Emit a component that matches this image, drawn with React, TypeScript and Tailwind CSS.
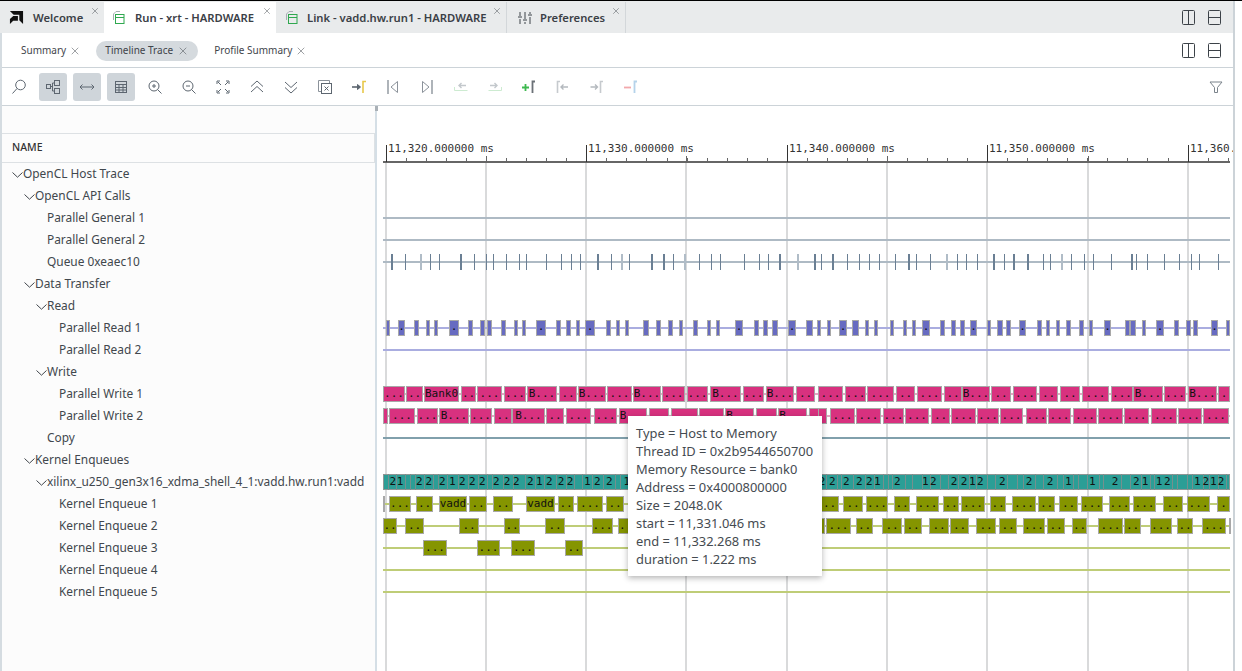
import type { ReactNode } from "react";
import { X } from "lucide-react";

// Bars are read off the screenshot as [start, end, label], in crops scaled 3x from a base x.
type Raw = [number, number, string?];
type Bar = { x: number; w: number; label: string };

const scaled = (base: number, raw: Raw[]): Bar[] =>
  raw.map(([a, b, label]) => {
    const x = Math.round(base + a / 3);
    return { x, w: Math.round(base + b / 3) - x, label: label ?? "" };
  });

const queueTicks: [number, number][] = [
  [390.7, 2], [405.3, 1], [420, 2], [430.3, 1], [439.3, 1], [460, 2], [474.3, 1], [485.7, 1], [493.3, 1], [506.3, 1],
  [519.3, 1], [526, 1], [546.3, 1], [561.3, 1], [571.3, 1], [580.3, 1], [597, 2], [611.3, 1], [620.7, 2], [629.3, 1],
  [650.7, 2], [663, 2], [673.3, 1], [684, 2], [699.3, 1], [711.3, 1], [720.3, 1], [744.3, 1], [759.3, 1], [768.3, 1],
  [779, 2], [797, 2], [814, 2], [821.3, 1], [832, 2], [847.3, 1], [859.3, 1], [869.3, 1], [879.3, 1], [895.3, 1],
  [908, 2], [916.3, 1], [930.3, 1], [946, 2], [957.3, 1], [965.7, 1], [977.3, 1], [992.7, 2], [1004.3, 1], [1013, 2],
  [1027, 2], [1043.3, 1], [1050.3, 1], [1060.7, 2], [1071.3, 1], [1084.3, 1], [1093.3, 1], [1111.3, 1], [1130.7, 2],
  [1136.3, 1], [1147.3, 1], [1164.3, 1], [1179.3, 1], [1191.3, 1], [1199, 1], [1218.3, 1],
];
const fadedTicks = [420, 620.7, 684, 797, 946, 1060.7];

const readBars = [
  ...scaled(370, [
    [47, 61], [83, 106, "."], [131, 148], [167, 181], [191, 205], [236, 268, "."], [293, 310], [329, 346], [351, 366],
    [392, 409], [431, 445], [455, 469], [497, 529, "."], [557, 574], [587, 604], [617, 631], [644, 676, "."], [707, 724],
    [737, 751], [764, 778], [818, 838], [857, 874], [893, 910], [926, 940], [968, 985], [1010, 1024], [1037, 1051],
    [1094, 1119, "."], [1151, 1168], [1178, 1195], [1207, 1225], [1253, 1279, "."],
  ]),
  ...scaled(800, [
    [19, 39], [50, 64], [80, 94], [118, 142, "."], [157, 177], [194, 208], [221, 235], [270, 282], [308, 322], [335, 349],
    [367, 391, "."], [419, 435], [452, 468], [479, 496], [509, 532, "."], [560, 574], [592, 609], [619, 634], [656, 679, "."],
    [710, 727], [737, 751], [767, 781], [797, 814], [836, 853], [866, 880], [911, 934, "."], [974, 991], [991, 1009],
    [1025, 1039], [1069, 1093, "."], [1121, 1138], [1157, 1173], [1180, 1195], [1232, 1255, "."], [1277, 1290],
  ]),
];

const write1Bars = [
  ...scaled(370, [
    [40, 105, "..."], [109, 158, ".."], [162, 266, "Bank0"], [272, 318, ".."], [322, 397, "..."], [402, 468, "..."],
    [472, 560, "B..."], [566, 620, ".."], [625, 708, "B..."], [712, 786, "..."], [790, 872, "B..."], [877, 945, "..."],
    [950, 1015, "..."], [1020, 1112, "B..."], [1118, 1183, "..."], [1188, 1272, "B..."], [1278, 1335, ".."],
  ]),
  ...scaled(820, [
    [-5, 70, "..."], [75, 138, "..."], [142, 222, "..."], [228, 285, ".."], [291, 367, "..."], [372, 425, ".."],
    [425, 510, "B..."], [514, 574, ".."], [580, 652, "..."], [657, 714, ".."], [720, 780, ".."], [786, 867, "..."],
    [873, 938, "..."], [940, 1028, "B..."], [1032, 1098, "..."], [1103, 1190, "B..."], [1195, 1230, "."],
  ]),
];

const write2Bars = [
  ...scaled(370, [
    [40, 53], [58, 134, "..."], [141, 204, "..."], [206, 296, "B..."], [300, 366, "..."], [372, 425, ".."], [427, 524, "B..."],
    [528, 581, ".."], [587, 663, "..."], [672, 742, "..."], [746, 831, "B..."], [837, 898, "..."], [903, 983, "..."],
    [987, 1063, "..."], [1066, 1152, "B..."], [1158, 1222, "..."], [1225, 1312, "B..."], [1317, 1370, ".."],
  ]),
  ...scaled(820, [
    [-5, 20], [30, 105, "..."], [108, 184, "..."], [190, 252, "..."], [255, 327, "..."], [333, 389, ".."], [393, 468, "..."],
    [471, 536, "..."], [540, 610, "..."], [617, 682, "..."], [685, 752, "..."], [759, 831, "..."], [834, 909, "..."],
    [912, 987, "..."], [993, 1070, "..."], [1074, 1145, "..."], [1149, 1227, "..."],
  ]),
];

const kernel1Bars = [
  ...scaled(370, [
    [40, 45], [57, 124, "..."], [137, 190, ".."], [207, 290, "vadd"], [297, 352, ".."], [368, 430, ".."], [467, 555, "vadd"],
    [563, 613, ".."], [620, 700, "..."], [708, 763, ".."],
  ]),
  ...scaled(820, [
    [0, 58, ".."], [68, 130, ".."], [137, 204, "..."], [221, 271, ".."], [287, 358, "..."], [368, 418, ".."], [423, 495, "..."],
    [509, 559, ".."], [575, 648, "..."], [654, 706, ".."], [716, 774, ".."], [782, 850, "..."], [866, 930, "..."],
    [938, 1009, "..."], [1030, 1090, ".."], [1100, 1170, "..."], [1190, 1230, "."],
  ]),
];

const kernel2Bars = [
  ...scaled(370, [[40, 82, ".."], [104, 162, ".."], [267, 327, ".."], [402, 450, ".."], [525, 585, ".."], [666, 730, "..."], [745, 790, ".."]]),
  ...scaled(820, [
    [0, 15], [18, 94, "..."], [107, 160, ".."], [186, 247, ".."], [252, 307, ".."], [326, 387, ".."], [390, 447, ".."], [468, 528, ".."],
    [536, 591, ".."], [608, 676, "..."], [681, 736, ".."], [755, 802, ".."], [833, 909, "..."], [912, 964, ".."], [989, 1056, "..."],
    [1070, 1120, ".."], [1145, 1217, "..."], [1226, 1230],
  ]),
];

const kernel3Bars = scaled(370, [[158, 232, "..."], [320, 390, "..."], [422, 496, "..."], [585, 640, ".."]]);

const tealSeps = [
  388, 396, 405, 410, 415, 424, 433, 438, 447, 458, 468, 478, 487, 492, 503, 513, 525, 535, 544, 556, 566, 574, 582, 592, 603, 615, 620,
  640, 655, 670, 700, 730, 760, 790, 826, 837, 841, 853, 865, 874, 883, 888, 892, 905, 912, 922, 930, 940, 948, 958, 969, 976, 987, 995,
  1007, 1017, 1023, 1035, 1043, 1057, 1063, 1073, 1078, 1087, 1099, 1103, 1121, 1130, 1141, 1150, 1154, 1172, 1177, 1187, 1192, 1203, 1209, 1218, 1226,
];

const tealLabels: [number, string][] = [
  [392.7, "2"], [400, "1"], [419.3, "2"], [428.7, "2"], [442.3, "2"], [452.3, "1"], [462.3, "2"], [472.3, "2"], [482.3, "2"],
  [496.3, "2"], [507, "2"], [516.3, "2"], [530.3, "2"], [539.3, "1"], [549.3, "2"], [561, "2"], [570, "2"], [587.3, "1"], [597.3, "2"],
  [609.3, "2"], [626.7, "1"], [822, "2"], [832.3, "2"], [846.3, "2"], [859.3, "2"], [869.3, "2"], [877.3, "1"], [897.3, "2"],
  [925.3, "1"], [933.3, "2"], [954, "2"], [964, "2"], [972.3, "1"], [980.3, "2"], [1002.3, "2"], [1029, "2"], [1050, "2"], [1068.3, "1"],
  [1092.3, "1"], [1115, "2"], [1136.3, "2"], [1145, "1"], [1159, "1"], [1167.3, "2"], [1197.3, "1"], [1205.7, "2"], [1213.3, "1"], [1221, "2"],
];

const gridLines = [386, 486, 586, 686, 787, 887, 987, 1088, 1188];
const minorTicks = Array.from({ length: 43 }, (_, i) => 406 + i * 20.04);
const rulerLabels: [number, string][] = [
  [386, "11,320.000000 ms"],
  [586, "11,330.000000 ms"],
  [787, "11,340.000000 ms"],
  [987, "11,350.000000 ms"],
  [1188, "11,360."],
];

const traceLines: [number, string][] = [
  [218, "#aebac4"], [240, "#aebac4"], [262, "#aebac4"], [328, "#aaade0"], [350, "#aaade0"], [394, "#e6a3c3"], [416, "#e6a3c3"],
  [438, "#81a0ac"], [482, "#8ac6bf"], [504, "#bfcd77"], [526, "#bfcd77"], [548, "#bfcd77"], [570, "#bfcd77"], [592, "#bfcd77"],
];

function BarRow({ bars, y, fill, textY = 11 }: { bars: Bar[]; y: number; fill: string; textY?: number }) {
  return (
    <g>
      {bars.map((b) => (
        <g key={b.x}>
          <rect x={b.x + 0.5} y={y + 0.5} width={Math.max(b.w - 1, 1)} height={15} fill={fill} stroke="#a8a8a8" />
          {b.label && (
            <text x={b.x + b.w / 2} y={y + textY} textAnchor="middle" fontSize={11} fill="#111">
              {b.label}
            </text>
          )}
        </g>
      ))}
    </g>
  );
}

function Timeline() {
  return (
    <svg viewBox="377 106 856 565" className="block h-[565px] w-[856px] font-['DejaVu_Sans_Mono',monospace]">
      {gridLines.map((x) => (
        <rect key={x} x={x - 1} y={162} width={2} height={509} fill="#d9dadb" />
      ))}
      <rect x={383} y={161} width={847} height={2} fill="#666" />
      {minorTicks.filter((x) => x < 1230).map((x) => (
        <rect key={x} x={Math.round(x)} y={158} width={1} height={4} fill="#666" />
      ))}
      {gridLines.filter((_, i) => i % 2 === 1).map((x) => (
        <rect key={x} x={x} y={156} width={1} height={6} fill="#666" />
      ))}
      {rulerLabels.map(([x, label]) => (
        <g key={x}>
          <rect x={x} y={145} width={1} height={17} fill="#333" />
          <text x={x + 2} y={152} fontSize={11} fill="#333">
            {label}
          </text>
        </g>
      ))}

      {traceLines.map(([y, color]) => (
        <rect key={y} x={383} y={y - 1} width={847} height={2} fill={color} />
      ))}

      {queueTicks.map(([x, w]) => (
        <rect
          key={x}
          x={Math.round(x)}
          y={254}
          width={w}
          height={16}
          fill={fadedTicks.includes(x) ? "#b0bcc7" : "#6a7f94"}
        />
      ))}

      <BarRow bars={readBars} y={320} fill="#676bc1" textY={10} />
      <BarRow bars={write1Bars} y={386} fill="#d8317f" />
      <BarRow bars={write2Bars} y={408} fill="#d8317f" />

      <rect x={383.5} y={474.5} width={846} height={15} fill="#2b9e96" stroke="#8f9695" />
      {tealSeps.map((x) => (
        <rect key={x} x={x} y={474} width={1} height={16} fill="#74908e" />
      ))}
      {tealLabels.map(([x, label]) => (
        <text key={x} x={x} y={485} textAnchor="middle" fontSize={11} fill="#111">
          {label}
        </text>
      ))}

      <BarRow bars={kernel1Bars} y={496} fill="#859500" />
      <BarRow bars={kernel2Bars} y={518} fill="#859500" />
      <BarRow bars={kernel3Bars} y={540} fill="#859500" />
    </svg>
  );
}

// Toolbar icons are all drawn on a 20x20 box
function Ic({ children }: { children: ReactNode }) {
  return (
    <svg width="20" height="20" viewBox="0 0 20 20" fill="none" stroke="#5d6670" strokeWidth="1">
      {children}
    </svg>
  );
}

const toolbar: { key: string; active?: boolean; icon: ReactNode }[] = [
  { key: "search", icon: <Ic><circle cx="11.5" cy="8" r="4.8" /><path d="M8 11.5 3.5 16.5" /></Ic> },
  { key: "hier", active: true, icon: <Ic><rect x="3.5" y="7.5" width="4" height="4" /><rect x="11.5" y="3.5" width="5" height="5" /><rect x="11.5" y="11.5" width="5" height="5" /><path d="M7.5 9.5h2M9.5 6v8M9.5 6h2M9.5 14h2" /></Ic> },
  { key: "fit", active: true, icon: <Ic><path d="M3 10h14M5.5 7.5 3 10l2.5 2.5M14.5 7.5 17 10l-2.5 2.5" /></Ic> },
  { key: "grid", active: true, icon: <Ic><rect x="4.5" y="4.5" width="11" height="11" /><path d="M4.5 7.5h11M4.5 10.5h11M4.5 13h11M8 7.5v8M12 7.5v8" /></Ic> },
  { key: "zin", icon: <Ic><circle cx="9" cy="9" r="5" /><path d="M12.5 12.5 16.5 16.5M9 7v4M7 9h4" /></Ic> },
  { key: "zout", icon: <Ic><circle cx="9" cy="9" r="5" /><path d="M12.5 12.5 16.5 16.5M7 9h4" /></Ic> },
  { key: "full", icon: <Ic><path d="M4 7V4h3M13 4h3v3M16 13v3h-3M7 16H4v-3M5 5l3 3M15 5l-3 3M15 15l-3-3M5 15l3-3" /></Ic> },
  { key: "up", icon: <Ic><path d="M4 9.5 10 4l6 5.5M4 15 10 9.5l6 5.5" /></Ic> },
  { key: "down", icon: <Ic><path d="M4 5 10 10.5 16 5M4 10.5 10 16l6-5.5" /></Ic> },
  { key: "close", icon: <Ic><path d="M14.5 6V3.5h-11v11H6" stroke="#8b929a" /><rect x="6.5" y="6.5" width="10" height="10" /><path d="M9.5 9.5l4 4M13.5 9.5l-4 4" /></Ic> },
  { key: "mark", icon: <Ic><path d="M3 10h8" strokeWidth="1.6" /><path d="M8.5 7.5 11.5 10l-3 2.5z" fill="#5d6670" /><path d="M14 16V4.5h3" stroke="#e8c84a" strokeWidth="1.6" /></Ic> },
  { key: "prev", icon: <Ic><path d="M5 3v14" stroke="#9aa1a8" strokeWidth="1.6" /><path d="M14.5 4.5 8 10l6.5 5.5z" stroke="#8b929a" /></Ic> },
  { key: "next", icon: <Ic><path d="M15 3v14" stroke="#9aa1a8" strokeWidth="1.6" /><path d="M5.5 4.5 12 10l-6.5 5.5z" stroke="#8b929a" /></Ic> },
  { key: "sl", icon: <Ic><path d="M15 8.5H8M10.5 6 8 8.5l2.5 2.5" stroke="#c3c8cc" strokeWidth="1.4" /><path d="M3.5 10v3.5h13" stroke="#cdebd1" /></Ic> },
  { key: "sr", icon: <Ic><path d="M5 8.5h7M9.5 6 12 8.5 9.5 11" stroke="#c3c8cc" strokeWidth="1.4" /><path d="M3.5 13.5h13V10" stroke="#cdebd1" /></Ic> },
  { key: "add", icon: <Ic><path d="M3 10.5h7M6.5 7v7" stroke="#3fb950" strokeWidth="1.8" /><path d="M13.5 16V4.5H16" stroke="#6b7177" strokeWidth="1.8" /></Ic> },
  { key: "ml", icon: <Ic><path d="M4.5 16V4.5H7" stroke="#c6cace" strokeWidth="1.6" /><path d="M15 10H8M10.5 7.5 8 10l2.5 2.5" stroke="#b4b9be" strokeWidth="1.4" /></Ic> },
  { key: "mr", icon: <Ic><path d="M3.5 10h7M8 7.5 10.5 10 8 12.5" stroke="#b4b9be" strokeWidth="1.4" /><path d="M13.5 16V4.5H16" stroke="#c6cace" strokeWidth="1.6" /></Ic> },
  { key: "rm", icon: <Ic><path d="M3 10.5h7" stroke="#f2a9ac" strokeWidth="1.8" /><path d="M13.5 16V4.5H16" stroke="#b5d3ea" strokeWidth="1.8" /></Ic> },
];

function SplitIcons() {
  return (
    <div className="flex items-center gap-[13px]">
      <svg width="13" height="15" viewBox="0 0 13 15" fill="none" stroke="#3c4248">
        <rect x="0.5" y="0.5" width="12" height="14" rx="1" />
        <path d="M6.5 0.5v14" />
      </svg>
      <svg width="13" height="15" viewBox="0 0 13 15" fill="none" stroke="#3c4248">
        <rect x="0.5" y="0.5" width="12" height="14" rx="1" />
        <path d="M0.5 7.5h12" />
      </svg>
    </div>
  );
}

function ProjectIcon() {
  return (
    <svg width="13" height="14" viewBox="0 0 13 14" fill="none">
      <path d="M1.5 9V3L4 0.5h4" stroke="#a7adb3" />
      <rect x="3.5" y="3.5" width="8.5" height="9" stroke="#2fa84f" />
      <path d="M3.5 6.5h8.5" stroke="#2fa84f" />
    </svg>
  );
}

function Tab({ label, icon, width, iconBox, active }: { label: string; icon: ReactNode; width: string; iconBox: string; active?: boolean }) {
  return (
    <div className={`relative flex h-full items-center ${width} ${active ? "bg-white" : ""}`}>
      <div className={`flex shrink-0 justify-center ${iconBox}`}>{icon}</div>
      <span className="mt-[1px] text-[11.25px] font-semibold whitespace-nowrap text-[#3b4046]">{label}</span>
      <X size={10} strokeWidth={1.2} className="absolute right-[4px] top-[4px] text-[#4a5056]" />
    </div>
  );
}

type TreeRow = { label: string; level: string; open?: boolean };

const tree: TreeRow[] = [
  { label: "OpenCL Host Trace", level: "pl-3", open: true },
  { label: "OpenCL API Calls", level: "pl-6", open: true },
  { label: "Parallel General 1", level: "pl-9" },
  { label: "Parallel General 2", level: "pl-9" },
  { label: "Queue 0xeaec10", level: "pl-9" },
  { label: "Data Transfer", level: "pl-6", open: true },
  { label: "Read", level: "pl-9", open: true },
  { label: "Parallel Read 1", level: "pl-12" },
  { label: "Parallel Read 2", level: "pl-12" },
  { label: "Write", level: "pl-9", open: true },
  { label: "Parallel Write 1", level: "pl-12" },
  { label: "Parallel Write 2", level: "pl-12" },
  { label: "Copy", level: "pl-9" },
  { label: "Kernel Enqueues", level: "pl-6", open: true },
  { label: "xilinx_u250_gen3x16_xdma_shell_4_1:vadd.hw.run1:vadd", level: "pl-9", open: true },
  { label: "Kernel Enqueue 1", level: "pl-12" },
  { label: "Kernel Enqueue 2", level: "pl-12" },
  { label: "Kernel Enqueue 3", level: "pl-12" },
  { label: "Kernel Enqueue 4", level: "pl-12" },
  { label: "Kernel Enqueue 5", level: "pl-12" },
];

const tooltipLines = [
  "Type = Host to Memory",
  "Thread ID = 0x2b9544650700",
  "Memory Resource = bank0",
  "Address = 0x4000800000",
  "Size = 2048.0K",
  "start = 11,331.046 ms",
  "end = 11,332.268 ms",
  "duration = 1.222 ms",
];

export default function App() {
  return (
    <div className="relative h-[671px] w-[1242px] overflow-hidden border-t border-black bg-white font-['Noto_Sans',sans-serif]">
      <div className="flex h-[670px] w-[1235px] flex-col border-r-2 border-[#ccd3d8]">
        {/* top editor tabs */}
        <div className="flex h-[32px] shrink-0 items-center bg-[#e9ebec] pr-[12px] pt-[1px]">
          <Tab
            label="Welcome"
            width="w-[104px]"
            iconBox="w-[33px]"
            icon={
              <svg width="15" height="15" viewBox="0 0 16 16" fill="#111">
                <path d="M1 1h14v14l-4-4V5H5z" />
                <path d="M4.5 6.5h5v5h-5L1 15V9.5z" />
              </svg>
            }
          />
          <Tab label="Run - xrt - HARDWARE" width="w-[172px]" iconBox="w-[31px] pr-[3px]" active icon={<ProjectIcon />} />
          <Tab label="Link - vadd.hw.run1 - HARDWARE" width="w-[231px] border-r border-[#d3d7da]" iconBox="w-[31px] pr-[1px]" icon={<ProjectIcon />} />
          <Tab
            label="Preferences"
            width="w-[119px] border-r border-[#d3d7da]"
            iconBox="w-[33px] pl-[2px]"
            icon={
              <svg width="14" height="14" viewBox="0 0 14 14" fill="none" stroke="#3c4248">
                <path d="M2 1v4M2 8v5M7 1v7M7 11v2M12 1v2M12 6v7M0 6h4M5 9h4M10 4h4" />
              </svg>
            }
          />
          <div className="ml-auto">
            <SplitIcons />
          </div>
        </div>

        <div className="flex min-h-0 flex-1 flex-col border-l-2 border-[#d5dce1]">
          {/* report tabs */}
          <div className="flex h-[35px] shrink-0 items-center border-b border-[#ccd3d8] pr-[12px] pt-[1px] text-[10px] text-[#3f454b]">
            <div className="ml-[19px] flex items-center gap-[3px]">
              Summary <X size={12} strokeWidth={1} />
            </div>
            <div className="ml-[15px] flex h-[20px] w-[102px] items-center justify-center gap-[4px] rounded-full bg-[#d5dade]">
              Timeline Trace <X size={12} strokeWidth={1} />
            </div>
            <div className="ml-[16px] flex items-center gap-[3px]">
              Profile Summary <X size={12} strokeWidth={1} />
            </div>
            <div className="ml-auto">
              <SplitIcons />
            </div>
          </div>

          {/* toolbar */}
          <div className="flex h-[38px] shrink-0 items-center gap-[6px] border-b border-[#ccd3d8] pl-[3px] pr-[6px]">
            {toolbar.map((t) => (
              <div
                key={t.key}
                className={`flex h-[28px] w-[28px] items-center justify-center rounded-[3px] ${t.active ? "bg-[#cfd5da]" : ""}`}
              >
                {t.icon}
              </div>
            ))}
            <svg className="ml-auto mr-[4px]" width="14" height="14" viewBox="0 0 14 14" fill="none" stroke="#7b838b">
              <path d="M1 2h12L8.5 7.5V12.5h-3V7.5z" />
            </svg>
          </div>

          <div className="flex min-h-0 flex-1">
            {/* name column */}
            <div className="h-full w-[373px] shrink-0 bg-[#fcfcfc] pt-[27px]">
              <div className="flex h-[30px] items-center border-y border-r border-[#dde1e4] pl-[10px] text-[10.5px] font-medium text-[#333]">
                NAME
              </div>
              {tree.map((row) => (
                <div key={row.label} className={`flex h-[22px] items-center text-[11.9px] whitespace-nowrap text-[#41474d] ${row.level}`}>
                  <span className="-ml-[2px] flex w-[11px] shrink-0 items-center justify-center">
                    {row.open && (
                      <svg width="11" height="6" viewBox="0 0 11 6" fill="none" stroke="#41474d" className="mt-[2px]">
                        <path d="M0.5 0.5 5.5 5.2 10.5 0.5" />
                      </svg>
                    )}
                  </span>
                  {row.label}
                </div>
              ))}
            </div>

            {/* timeline */}
            <div className="relative min-w-0 flex-1 border-l-2 border-[#d5dfe6]">
              <div className="absolute -left-[2px] top-0 h-[5px] w-[3px] bg-[#a9b0b6]" />
              <Timeline />
            </div>
          </div>
        </div>
      </div>

      {/* hover tooltip */}
      <div className="absolute left-[628px] top-[415px] h-[160px] w-[194px] bg-white px-2 py-2 text-[12.9px] leading-[18px] whitespace-nowrap text-[#454b51] shadow-[0_2px_6px_rgba(0,0,0,0.3)]">
        {tooltipLines.map((line) => (
          <div key={line}>{line}</div>
        ))}
      </div>
    </div>
  );
}
